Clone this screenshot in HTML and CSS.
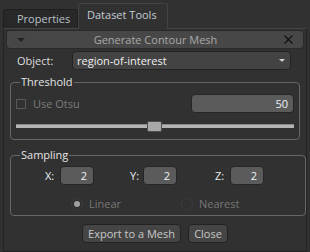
FILE: index.html
```html
<!DOCTYPE html>
<html lang="en">
<head>
  <meta charset="UTF-8" />
  <title>Generate Contour Mesh</title>
  <link rel="stylesheet" href="styles.css">
</head>
<body>
  <div class="tabs">
    <div class="tab">Properties</div>
    <div class="tab active">Dataset Tools</div>
  </div>

  <div class="panel">
    <div class="header">
      <span class="arrow"></span>
      <span class="header-title">Generate Contour Mesh</span>
      <svg class="close-x" width="9" height="9" viewBox="0 0 9 9">
        <path d="M0.5 0.5 L8.5 8.5 M8.5 0.5 L0.5 8.5" stroke="#111" stroke-width="1.2" fill="none"/>
      </svg>
    </div>

    <div class="object-row">
      <label class="object-label">Object:</label>
      <div class="combo">
        <span>region-of-interest</span>
        <span class="combo-arrow"></span>
      </div>
    </div>

    <fieldset class="group threshold">
      <legend>Threshold</legend>
      <div class="otsu-row">
        <label class="check">
          <span class="box"></span>
          <span>Use Otsu</span>
        </label>
        <div class="spin wide">50</div>
      </div>
      <div class="slider">
        <div class="track"></div>
        <div class="handle"></div>
      </div>
    </fieldset>

    <fieldset class="group sampling">
      <legend>Sampling</legend>
      <div class="xyz">
        <div class="cell"><span class="axis">X:</span><div class="spin small">2</div></div>
        <div class="cell"><span class="axis narrow">Y:</span><div class="spin small">2</div></div>
        <div class="cell"><span class="axis">Z:</span><div class="spin small">2</div></div>
      </div>
      <div class="radios">
        <label class="radio"><span class="dot checked"></span>Linear</label>
        <label class="radio"><span class="dot"></span>Nearest</label>
      </div>
    </fieldset>

    <div class="buttons">
      <button class="btn export">Export to a Mesh</button>
      <button class="btn close">Close</button>
    </div>
  </div>
</body>
</html>
```

FILE: styles.css
```css
body {
  margin: 0;
  background: #313131;
  font-family: 'Open Sans', 'Noto Sans', sans-serif;
  font-size: 11px;
  color: #d8d8d8;
  height: 252px;
  overflow: hidden;
}

.tabs {
  display: flex;
  align-items: flex-end;
  height: 28px;
  padding-left: 3px;
}

.tab {
  box-sizing: border-box;
  height: 19px;
  width: 75px;
  padding-left: 13px;
  line-height: 17px;
  background: #282828;
  border: 1px solid #1f1f1f;
  border-bottom: none;
  border-radius: 3px 3px 0 0;
  color: #b8c0c8;
}

.tab.active {
  height: 26px;
  width: 90px;
  padding-left: 8px;
  line-height: 22px;
  background: #313131;
  border-color: #444;
  margin-bottom: -1px;
  position: relative;
  color: #c4ccd4;
}

.panel {
  box-sizing: border-box;
  height: 224px;
  margin: 0 3px 0 3px;
  border: 1px solid #242424;
  border-top-color: #444;
  padding: 1px 2px 0 2px;
}

.header {
  box-sizing: border-box;
  height: 19px;
  display: flex;
  align-items: center;
  background: #474747;
  border: 1px solid #2a2a2a;
  border-radius: 4px;
  padding: 0 10px 0 10px;
  color: #a9a9a9;
}

.arrow {
  width: 0;
  height: 0;
  border-left: 4px solid transparent;
  border-right: 4px solid transparent;
  border-top: 4px solid #222;
}

.header-title {
  flex: 1;
  text-align: center;
  margin-left: 2px;
}

.close-x {
  display: block;
}

.object-row {
  display: flex;
  align-items: center;
  margin-top: 2px;
  height: 19px;
}

.object-label {
  width: 55px;
  padding-left: 11px;
  color: #dedede;
}

.combo {
  box-sizing: border-box;
  width: 219px;
  height: 19px;
  display: flex;
  align-items: center;
  justify-content: space-between;
  padding: 0 5px 0 4px;
  background: #434343;
  border: 1px solid #242424;
  border-radius: 4px;
  color: #f0f0f0;
}

.combo-arrow {
  width: 0;
  height: 0;
  border-left: 3px solid transparent;
  border-right: 3px solid transparent;
  border-top: 3px solid #d0d0d0;
}

.group {
  box-sizing: border-box;
  margin: 0 4px;
  border: 1px solid #666;
  border-radius: 4px;
  padding: 0 5px;
}

.group legend {
  padding: 0 1px;
  margin-left: 4px;
  color: #e4e4e4;
  line-height: 12px;
}

.threshold {
  margin-top: 6px;
  height: 64px;
}

.otsu-row {
  display: flex;
  align-items: center;
  justify-content: space-between;
  margin-top: 6px;
}

.check {
  display: flex;
  align-items: center;
  color: #7c7c7c;
}

.box {
  box-sizing: border-box;
  width: 10px;
  height: 10px;
  border: 1px solid #5a5a5a;
  margin-right: 7px;
}

.spin {
  box-sizing: border-box;
  height: 19px;
  line-height: 17px;
  text-align: right;
  background: #5b5b5b;
  border: 1px solid #262626;
  border-radius: 4px;
  color: #eef2f6;
}

.spin.wide {
  width: 103px;
  padding-right: 5px;
}

.spin.small {
  width: 34px;
  padding-right: 6px;
}

.slider {
  position: relative;
  height: 11px;
  margin-top: 8px;
}

.track {
  position: absolute;
  left: 0;
  right: 0;
  top: 3px;
  height: 4px;
  background: #b4b4b4;
  border-top: 1px solid #8a8a8a;
  box-sizing: border-box;
}

.handle {
  position: absolute;
  left: 131px;
  top: 0;
  width: 15px;
  height: 11px;
  box-sizing: border-box;
  background: #a8a8a8;
  border: 1px solid #505050;
  border-radius: 2px;
}

.sampling {
  margin-top: 9px;
  height: 67px;
}

.xyz {
  display: flex;
  padding-left: 29px;
  margin-top: 5px;
}

.cell {
  display: flex;
  align-items: center;
  width: 85px;
}

.axis {
  width: 15px;
  color: #e8ecf0;
}

.axis.narrow {
  width: 13px;
}

.radios {
  display: flex;
  margin-top: 11px;
  padding-left: 55px;
  color: #777;
}

.radio {
  display: flex;
  align-items: center;
  width: 110px;
}

.dot {
  box-sizing: border-box;
  width: 12px;
  height: 12px;
  border-radius: 50%;
  border: 1px solid #3c3c3c;
  margin-right: 6px;
  position: relative;
}

.dot.checked::after {
  content: "";
  position: absolute;
  left: 2px;
  top: 2px;
  width: 6px;
  height: 6px;
  border-radius: 50%;
  background: #a0a0a0;
}

.buttons {
  display: flex;
  justify-content: center;
  gap: 7px;
  margin-top: 8px;
}

.btn {
  box-sizing: border-box;
  height: 19px;
  padding: 0;
  white-space: nowrap;
  font-family: inherit;
  font-size: 11px;
  color: #c8c8c8;
  background: #454545;
  border: 1px solid #222;
  border-radius: 4px;
}

.btn.export {
  width: 99px;
}

.btn.close {
  width: 40px;
}
```
